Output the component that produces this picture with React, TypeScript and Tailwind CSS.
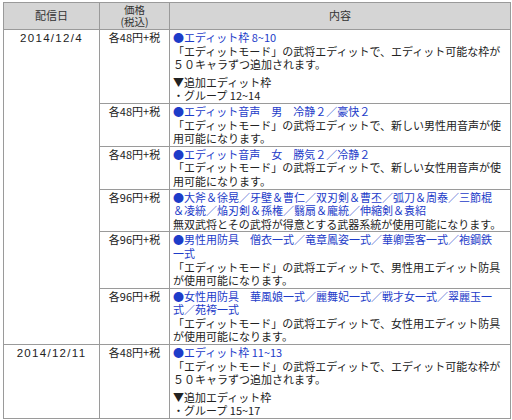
import React from 'react';

type Row = {
  date?: string;
  dateSpan?: number;
  price: string;
  title: string[];
  body: string[];
  extra?: string[];
};

const rows: Row[] = [
  {
    date: '2014/12/4',
    dateSpan: 6,
    price: '各48円+税',
    title: ['●エディット枠 8~10'],
    body: ['「エディットモード」の武将エディットで、エディット可能な枠が', '５０キャラずつ追加されます。'],
    extra: ['▼追加エディット枠', '・グループ 12~14'],
  },
  {
    price: '各48円+税',
    title: ['●エディット音声　男　冷静２／豪快２'],
    body: ['「エディットモード」の武将エディットで、新しい男性用音声が使', '用可能になります。'],
  },
  {
    price: '各48円+税',
    title: ['●エディット音声　女　勝気２／冷静２'],
    body: ['「エディットモード」の武将エディットで、新しい女性用音声が使', '用可能になります。'],
  },
  {
    price: '各96円+税',
    title: ['●大斧＆徐晃／牙壁＆曹仁／双刃剣＆曹丕／弧刀＆周泰／三節棍', '＆凌統／焔刃剣＆孫権／翳扇＆龐統／伸縮剣＆袁紹'],
    body: ['無双武将とその武将が得意とする武器系統が使用可能になります。'],
  },
  {
    price: '各96円+税',
    title: ['●男性用防具　僧衣一式／竜章鳳姿一式／華卿雲客一式／袍鋼鉄', '一式'],
    body: ['「エディットモード」の武将エディットで、男性用エディット防具', 'が使用可能になります。'],
  },
  {
    price: '各96円+税',
    title: ['●女性用防具　華風娘一式／麗舞妃一式／戦才女一式／翠麗玉一', '式／苑袴一式'],
    body: ['「エディットモード」の武将エディットで、女性用エディット防具', 'が使用可能になります。'],
  },
  {
    date: '2014/12/11',
    dateSpan: 1,
    price: '各48円+税',
    title: ['●エディット枠 11~13'],
    body: ['「エディットモード」の武将エディットで、エディット可能な枠が', '５０キャラずつ追加されます。'],
    extra: ['▼追加エディット枠', '・グループ 15~17'],
  },
];

const jp = { fontFamily: '"Noto Sans CJK JP", sans-serif' };
const latin = { fontFamily: '"Liberation Sans", Arial, sans-serif' };

export default function App() {
  return (
    <div className="w-[512px] h-[420px] bg-white pl-[3px] pt-[2px] text-[#222]" style={jp}>
      <table className="w-[507px] border-collapse border border-[#8a8a8a] text-[11px] leading-[13.6px] table-fixed">
        <colgroup>
          <col className="w-[96px]" />
          <col className="w-[70px]" />
          <col className="w-[341px]" />
        </colgroup>
        <thead>
          <tr className="bg-[#d5d5d5] text-[#333] h-[27px]">
            <th className="border border-[#9a9a9a] font-normal text-center align-middle">配信日</th>
            <th className="border border-[#9a9a9a] font-normal text-center align-middle text-[10.5px] leading-[12.5px]">
              価格
              <br />
              (税込)
            </th>
            <th className="border border-[#9a9a9a] font-normal text-center align-middle">内容</th>
          </tr>
        </thead>
        <tbody>
          {rows.map((row, i) => (
            <tr key={i}>
              {row.date && (
                <td
                  rowSpan={row.dateSpan}
                  className="border border-[#9a9a9a] text-center align-top pt-px tracking-[1.3px] text-[11.5px] leading-[14px]"
                  style={latin}
                >
                  {row.date}
                </td>
              )}
              <td className="border border-[#9a9a9a] text-center align-top pt-px whitespace-nowrap">{row.price}</td>
              <td className="border border-[#9a9a9a] align-top pl-[3px] pt-px whitespace-nowrap">
                <div className="text-[#1d3cc9]">
                  {row.title.map((t, j) => (
                    <div key={j}>{t}</div>
                  ))}
                </div>
                {row.body.map((t, j) => (
                  <div key={j}>{t}</div>
                ))}
                {row.extra && (
                  <div className="mt-1">
                    {row.extra.map((t, j) => (
                      <div key={j}>{t}</div>
                    ))}
                  </div>
                )}
              </td>
            </tr>
          ))}
        </tbody>
      </table>
    </div>
  );
}
